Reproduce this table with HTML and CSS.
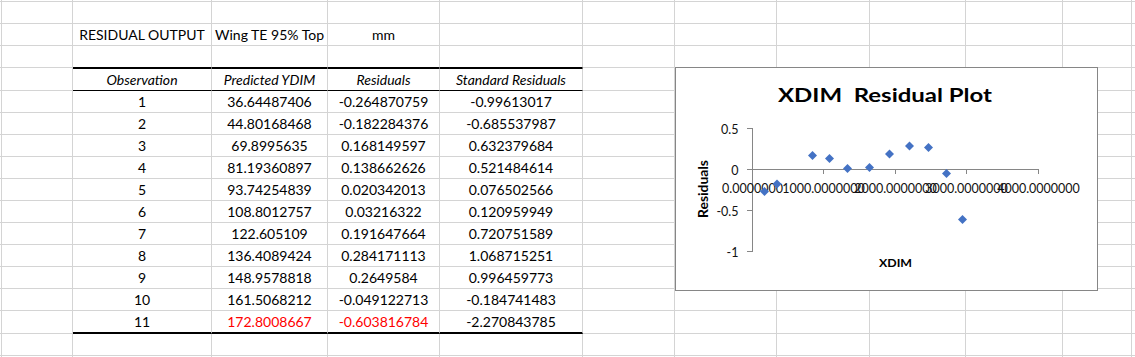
FILE: index.html
```html
<!DOCTYPE html>
<html lang="en">
<head>
<meta charset="utf-8">
<title>Residual Output</title>
<link rel="stylesheet" href="styles.css">
</head>
<body>
<div class="sheet">
  <div class="row thin"><div></div><div></div><div></div><div></div><div></div><div></div><div></div><div></div><div></div><div></div><div></div><div></div><div></div></div>
  <div class="row"><div></div><div></div><div></div><div></div><div></div><div></div><div></div><div></div><div></div><div></div><div></div><div></div><div></div></div>
  <div class="row"><div></div><div></div><div>RESIDUAL OUTPUT</div><div>Wing TE 95% Top</div><div>mm</div><div></div><div></div><div></div><div></div><div></div><div></div><div></div><div></div></div>
  <div class="row"><div></div><div></div><div class="top-rule"></div><div class="top-rule"></div><div class="top-rule"></div><div class="top-rule"></div><div></div><div></div><div></div><div></div><div></div><div></div><div></div></div>
  <div class="row tall"><div></div><div></div><div class="hd">Observation</div><div class="hd">Predicted YDIM</div><div class="hd">Residuals</div><div class="hd">Standard Residuals</div><div></div><div></div><div></div><div></div><div></div><div></div><div></div></div>
  <div class="row"><div></div><div></div><div>1</div><div>36.64487406</div><div>-0.264870759</div><div>-0.99613017</div><div></div><div></div><div></div><div></div><div></div><div></div><div></div></div>
  <div class="row"><div></div><div></div><div>2</div><div>44.80168468</div><div>-0.182284376</div><div>-0.685537987</div><div></div><div></div><div></div><div></div><div></div><div></div><div></div></div>
  <div class="row"><div></div><div></div><div>3</div><div>69.8995635</div><div>0.168149597</div><div>0.632379684</div><div></div><div></div><div></div><div></div><div></div><div></div><div></div></div>
  <div class="row"><div></div><div></div><div>4</div><div>81.19360897</div><div>0.138662626</div><div>0.521484614</div><div></div><div></div><div></div><div></div><div></div><div></div><div></div></div>
  <div class="row"><div></div><div></div><div>5</div><div>93.74254839</div><div>0.020342013</div><div>0.076502566</div><div></div><div></div><div></div><div></div><div></div><div></div><div></div></div>
  <div class="row"><div></div><div></div><div>6</div><div>108.8012757</div><div>0.03216322</div><div>0.120959949</div><div></div><div></div><div></div><div></div><div></div><div></div><div></div></div>
  <div class="row"><div></div><div></div><div>7</div><div>122.605109</div><div>0.191647664</div><div>0.720751589</div><div></div><div></div><div></div><div></div><div></div><div></div><div></div></div>
  <div class="row"><div></div><div></div><div>8</div><div>136.4089424</div><div>0.284171113</div><div>1.068715251</div><div></div><div></div><div></div><div></div><div></div><div></div><div></div></div>
  <div class="row"><div></div><div></div><div>9</div><div>148.9578818</div><div>0.2649584</div><div>0.996459773</div><div></div><div></div><div></div><div></div><div></div><div></div><div></div></div>
  <div class="row"><div></div><div></div><div>10</div><div>161.5068212</div><div>-0.049122713</div><div>-0.184741483</div><div></div><div></div><div></div><div></div><div></div><div></div><div></div></div>
  <div class="row tall"><div></div><div></div><div class="end">11</div><div class="end neg">172.8008667</div><div class="end neg">-0.603816784</div><div class="end">-2.270843785</div><div></div><div></div><div></div><div></div><div></div><div></div><div></div></div>
  <div class="row"><div></div><div></div><div></div><div></div><div></div><div></div><div></div><div></div><div></div><div></div><div></div><div></div><div></div></div>
  <div class="row"><div></div><div></div><div></div><div></div><div></div><div></div><div></div><div></div><div></div><div></div><div></div><div></div><div></div></div>

  <div class="chart">
    <svg width="421" height="222" viewBox="1 1 421 222" xmlns="http://www.w3.org/2000/svg">
      <text class="ttl" x="103" y="35" textLength="214" lengthAdjust="spacingAndGlyphs" xml:space="preserve">XDIM  Residual Plot</text>
      <g class="axis">
        <path d="M77.5 61 V185"/>
        <path d="M72 61.5 H77.5 M72 102.5 H77.5 M72 143.5 H77.5 M72 184.5 H77.5"/>
        <path d="M77 102.5 H364"/>
        <path d="M77.5 102.5 V107 M148.5 102.5 V107 M220.5 102.5 V107 M291.5 102.5 V107 M363.5 102.5 V107"/>
      </g>
      <g class="tick ylab">
        <text x="63.5" y="66.5">0.5</text>
        <text x="63.5" y="107.5">0</text>
        <text x="63.5" y="148.5">-0.5</text>
        <text x="63.5" y="189.5">-1</text>
      </g>
      <g class="tick xlab">
        <text x="77.5" y="125.5">0.0000000</text>
        <text x="148.5" y="125.5">1000.0000000</text>
        <text x="220.5" y="125.5">2000.0000000</text>
        <text x="291.5" y="125.5">3000.0000000</text>
        <text x="363.5" y="125.5">4000.0000000</text>
      </g>
      <g class="pts">
        <polygon points="89.5,120 94,124.5 89.5,129 85,124.5"/>
        <polygon points="102,112.5 106.5,117 102,121.5 97.5,117"/>
        <polygon points="137.5,84 142,88.5 137.5,93 133,88.5"/>
        <polygon points="154.5,87 159,91.5 154.5,96 150,91.5"/>
        <polygon points="172.5,97 177,101.5 172.5,106 168,101.5"/>
        <polygon points="194.5,96 199,100.5 194.5,105 190,100.5"/>
        <polygon points="214.5,82.5 219,87 214.5,91.5 210,87"/>
        <polygon points="234.5,74.5 239,79 234.5,83.5 230,79"/>
        <polygon points="253.5,76 258,80.5 253.5,85 249,80.5"/>
        <polygon points="271.5,102 276,106.5 271.5,111 267,106.5"/>
        <polygon points="287.5,148 292,152.5 287.5,157 283,152.5"/>
      </g>
      <text class="axt" transform="translate(33 122) rotate(-90)" text-anchor="middle" textLength="58" lengthAdjust="spacingAndGlyphs">Residuals</text>
      <text class="axt small" x="204" y="200" textLength="33" lengthAdjust="spacingAndGlyphs">XDIM</text>
    </svg>
  </div>
</div>
</body>
</html>
```

FILE: styles.css
```css
* {
  box-sizing: border-box;
}

html,
body {
  margin: 0;
  padding: 0;
  background: #ffffff;
  overflow: hidden;
}

body {
  width: 1135px;
  height: 357px;
  font-family: Lato, "Liberation Sans", sans-serif;
  font-size: 14px;
  color: #000000;
}

.sheet {
  position: relative;
  width: 1135px;
  height: 357px;
  overflow: hidden;
}

.row {
  display: grid;
  grid-template-columns: 2px 71px 139px 116px 112px 143px 92px 102px 93px 96px 97px 69px 3px;
  height: 22px;
  overflow: hidden;
}

.row.thin {
  height: 2px;
}

.row.tall {
  height: 23px;
}

.row > div {
  border-right: 1px solid #d4d4d4;
  border-bottom: 1px solid #d4d4d4;
  text-align: center;
  line-height: 21px;
  white-space: nowrap;
}

.row > div:last-child {
  border-right: 0;
}

.row > .top-rule {
  border-bottom-color: #000000;
}

.row > .hd {
  border-top: 1px solid #000000;
  border-bottom-color: #000000;
  font-style: italic;
}

.row > .end {
  border-bottom: 2px solid #000000;
}

.row > .neg {
  color: #ff0000;
}

.chart {
  position: absolute;
  left: 675px;
  top: 67px;
  width: 423px;
  height: 224px;
  border: 1px solid #868686;
  background: #ffffff;
}

.chart svg {
  display: block;
}

.ttl {
  font-family: Lato, "Liberation Sans", sans-serif;
  font-weight: bold;
  font-size: 19px;
  fill: #000000;
  white-space: pre;
}

.axis path {
  stroke: #868686;
  stroke-width: 1;
  fill: none;
}

.tick {
  font-family: Lato, "Liberation Sans", sans-serif;
  font-size: 12.5px;
  fill: #111111;
}

.ylab {
  text-anchor: end;
}

.xlab {
  text-anchor: middle;
}

.pts polygon {
  fill: #4472c4;
}

.axt {
  font-family: Lato, "Liberation Sans", sans-serif;
  font-weight: bold;
  font-size: 12.5px;
  fill: #000000;
}

.axt.small {
  font-size: 11.5px;
}
```
